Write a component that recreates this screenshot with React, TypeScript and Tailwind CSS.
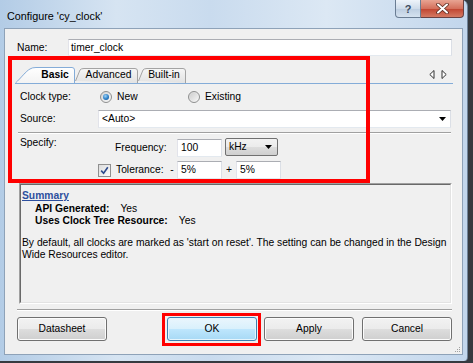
import React from "react";

const tb =
  "bg-white border border-[#dbdfe6] border-t-[#abadb3] border-l-[#e2e3ea] border-b-[#e3e9ef]";
const btn =
  "flex items-center justify-center w-[90px] h-[24px] rounded-[3px] border border-[#707070] bg-[linear-gradient(#f2f2f2_0%,#ebebeb_50%,#dddddd_51%,#cfcfcf_100%)] shadow-[inset_0_0_0_1px_#fcfcfc]";

function Radio({ checked }: { checked?: boolean }) {
  return (
    <div className="w-[12px] h-[12px] rounded-full border border-[#8e8f8f] bg-[linear-gradient(135deg,#d5d5d5,#f9f9f9)] flex items-center justify-center">
      {checked ? (
        <div className="w-[6px] h-[6px] rounded-full bg-[radial-gradient(circle_at_40%_35%,#9fd3f7_0%,#2a7ec6_55%,#1a4f8c_100%)]" />
      ) : (
        <div className="w-[8px] h-[8px] rounded-full bg-[linear-gradient(135deg,#cfcfcf,#f4f4f4)]" />
      )}
    </div>
  );
}

function Tab({
  w,
  label,
  selected,
  first,
}: {
  w: number;
  label: string;
  selected?: boolean;
  first?: boolean;
}) {
  const path = first
    ? `M0.5 16 C6 11 11 4 15 2 Q17 0.5 21 0.5 L${w - 3} 0.5 Q${w - 0.5} 0.5 ${w - 0.5} 3 L${w - 0.5} 16`
    : `M0.5 14 L5 3 Q6 1.5 9 1.5 L${w - 3} 1.5 Q${w - 0.5} 1.5 ${w - 0.5} 4 L${w - 0.5} 16`;
  return (
    <div className="relative h-[16px] flex items-center" style={{ width: w }}>
      <svg className="absolute inset-0" width={w} height={16} viewBox={`0 0 ${w} 16`}>
        <defs>
          <linearGradient id={`g${label}`} x1="0" y1="0" x2="0" y2="1">
            <stop offset="0" stopColor={selected ? "#ffffff" : "#f6f6f6"} />
            <stop offset="1" stopColor={selected ? "#f3f3f3" : "#e2e2e2"} />
          </linearGradient>
        </defs>
        <path d={path} fill={`url(#g${label})`} stroke={selected ? "#84acd8" : "#a3a3a3"} strokeWidth="1" />
      </svg>
      <span
        className={`relative w-full text-center ${selected ? "font-bold pl-[20px]" : "pl-[4px]"}`}
      >
        {label}
      </span>
    </div>
  );
}

export default function App() {
  return (
    <div className="w-[473px] h-[363px] bg-[#363a40] overflow-hidden font-['Liberation_Sans',Arial,sans-serif] text-[10.3px] leading-[12px] text-black">
      <div className="relative w-[468px] h-[361px] rounded-tr-[6px] rounded-br-[4px] bg-[linear-gradient(90deg,#b3cce6_0%,#d6e4f2_25%,#c9dbee_45%,#dce8f4_70%,#c2d6ec_100%)] border-r border-[#6f839a] flex flex-col pl-[4px] pr-[4px] pb-[6px]">
        {/* title bar */}
        <div className="h-[28px] flex items-start">
          <div className="pl-[3px] pt-[10px] text-[10.8px] leading-[13px] text-black">
            Configure 'cy_clock'
          </div>
          <div className="ml-auto flex mr-[-1px]">
            <div className="w-[26px] h-[18px] rounded-bl-[4px] border border-t-0 border-[#6a7d93] bg-[linear-gradient(#eef4fa,#cfdcea_50%,#bccde0_51%,#d5e2ef)] flex items-center justify-center text-[11px] font-bold text-[#3b4b5e]">
              ?
            </div>
            <div className="w-[43px] h-[18px] rounded-br-[4px] border border-t-0 border-l-0 border-[#6a4040] bg-[linear-gradient(#e8a493,#d4705c_50%,#c0432f_51%,#d57a63)] flex items-center justify-center">
              <svg width="13" height="11" viewBox="0 0 13 11">
                <path d="M2 1.5 L11 9.5 M11 1.5 L2 9.5" stroke="#5a2a20" strokeWidth="3.6" strokeLinecap="round" />
                <path d="M2 1.5 L11 9.5 M11 1.5 L2 9.5" stroke="#ffffff" strokeWidth="2" strokeLinecap="round" />
              </svg>
            </div>
          </div>
        </div>

        {/* content panel */}
        <div className="relative flex-1 bg-[#f0f0f0] border border-[#8ea2b8] flex flex-col">
          {/* Name */}
          <div className="mt-[10px] h-[17px] flex items-center">
            <div className="ml-[12px] w-[51px]">Name:</div>
            <div className={`${tb} w-[384px] h-[17px] flex items-center pl-[2px]`}>timer_clock</div>
          </div>

          {/* tabs */}
          <div className="mt-[11px] ml-[10px] w-[438px] flex items-end border-b border-[#84acd8]">
            <Tab w={60} label="Basic" selected first />
            <Tab w={63} label="Advanced" />
            <Tab w={48} label="Built-in" />
            <div className="ml-auto mr-[6px] mb-[4px] flex gap-[6px]">
              <svg width="6" height="9" viewBox="0 0 6 9">
                <path d="M5 0.5 L0.8 4.5 L5 8.5 Z" fill="#fff" stroke="#333" strokeWidth="1" />
              </svg>
              <svg width="6" height="9" viewBox="0 0 6 9">
                <path d="M1 0.5 L5.2 4.5 L1 8.5 Z" fill="#fff" stroke="#333" strokeWidth="1" />
              </svg>
            </div>
          </div>

          {/* page */}
          <div className="ml-[13px] w-[434px] flex flex-col">
            <div className="mt-[3px] h-[20px] flex items-center pl-[2px]">
              <div className="w-[80px]">Clock type:</div>
              <div className="w-[88px] flex items-center">
                <Radio checked />
                <span className="ml-[5px]">New</span>
              </div>
              <div className="flex items-center">
                <Radio />
                <span className="ml-[5px]">Existing</span>
              </div>
            </div>
            <div className="mt-[3px] h-[18px] flex items-center pl-[2px]">
              <div className="w-[78px]">Source:</div>
              <div className={`${tb} w-[353px] h-[18px] flex items-center pl-[3px] pr-[4px]`}>
                <span>&lt;Auto&gt;</span>
                <svg className="ml-auto" width="7" height="4" viewBox="0 0 7 4">
                  <path d="M0 0 L7 0 L3.5 4 Z" fill="#000" />
                </svg>
              </div>
            </div>
            <div className="mt-[4px] w-[433px] h-[2px] border-t border-[#a0a0a0] border-b border-b-white" />
            <div className="mt-[2px] flex items-start pl-[2px]">
              <div className="w-[78px] leading-[14px]">Specify:</div>
              <div className="pt-[3px] flex flex-col">
                <div className="h-[18px] flex items-center">
                  <div className="ml-[17px] w-[62px]">Frequency:</div>
                  <div className={`${tb} w-[45px] h-[18px] flex items-center pl-[3px]`}>100</div>
                  <div className="ml-[3px] -mt-[2px] w-[53px] h-[18px] rounded-[2px] border border-[#707070] bg-[linear-gradient(#f2f2f2_0%,#ebebeb_50%,#dddddd_51%,#cfcfcf_100%)] flex items-center pl-[3px] pr-[5px]">
                    <span>kHz</span>
                    <svg className="ml-auto" width="7" height="4" viewBox="0 0 7 4">
                      <path d="M0 0 L7 0 L3.5 4 Z" fill="#000" />
                    </svg>
                  </div>
                </div>
                <div className="mt-[4px] h-[18px] flex items-center">
                  <div className="w-[13px] h-[13px] border border-[#8f8f8f] bg-[linear-gradient(135deg,#dcdcdc,#fbfbfb)] flex items-center justify-center">
                    <svg width="9" height="9" viewBox="0 0 9 9">
                      <path d="M1.2 4.6 L3.6 7.2 L7.8 1.2" fill="none" stroke="#2c4a8c" strokeWidth="1.6" />
                    </svg>
                  </div>
                  <div className="ml-[5px] w-[51px]">Tolerance:</div>
                  <div className="w-[10px] text-center">-</div>
                  <div className={`${tb} w-[45px] h-[18px] flex items-center pl-[3px]`}>5%</div>
                  <div className="w-[14px] text-center">+</div>
                  <div className={`${tb} w-[45px] h-[18px] flex items-center pl-[3px]`}>5%</div>
                </div>
              </div>
            </div>

            {/* summary */}
            <div className="mt-[4px] ml-[1px] w-[433px] h-[121px] border border-[#a0a0a0] border-r-white border-b-white">
              <div className="h-full border border-[#696969] border-r-[#e3e3e3] border-b-[#e3e3e3] pl-[1px] pt-[5px] leading-[12.5px]">
                <div className="font-bold text-[#2d4f9e] underline">Summary</div>
                <div className="pl-[13px]">
                  <span className="font-bold">API Generated:</span>
                  <span className="ml-[11px]">Yes</span>
                </div>
                <div className="pl-[13px]">
                  <span className="font-bold">Uses Clock Tree Resource:</span>
                  <span className="ml-[11px]">Yes</span>
                </div>
                <div className="mt-[9px] whitespace-nowrap">
                  By default, all clocks are marked as 'start on reset'. The setting can be changed in the Design
                  <br />
                  Wide Resources editor.
                </div>
              </div>
            </div>
          </div>

          {/* bottom separator */}
          <div className="mt-[5px] ml-[12px] w-[435px] h-[2px] border-t border-[#a0a0a0] border-b border-b-white" />

          {/* buttons */}
          <div className="mt-[6px] ml-[12px] flex">
            <div className={btn}>Datasheet</div>
            <div className="ml-[60px] flex items-center justify-center w-[90px] h-[24px] rounded-[3px] border border-[#3c7fb1] bg-[linear-gradient(#eaf6fd_0%,#d9f0fc_50%,#bee6fd_51%,#a7d9f5_100%)] shadow-[inset_0_0_0_1px_#e6f5fd]">
              OK
            </div>
            <div className={`${btn} ml-[7px]`}>Apply</div>
            <div className={`${btn} ml-[8px]`}>Cancel</div>
          </div>

          {/* size grip */}
          <svg className="absolute right-[1px] bottom-[1px]" width="8" height="8" viewBox="0 0 8 8">
            <rect x="6" y="2" width="1" height="1" fill="#a0a0a0" />
            <rect x="4" y="4" width="1" height="1" fill="#a0a0a0" />
            <rect x="6" y="4" width="1" height="1" fill="#a0a0a0" />
            <rect x="2" y="6" width="1" height="1" fill="#a0a0a0" />
            <rect x="4" y="6" width="1" height="1" fill="#a0a0a0" />
            <rect x="6" y="6" width="1" height="1" fill="#a0a0a0" />
          </svg>
        </div>

        {/* annotation overlays */}
        <div className="absolute left-[8px] top-[56px] w-[362px] h-[127px] border-[4px] border-[#ff0000] pointer-events-none" />
        <div className="absolute left-[162px] top-[313px] w-[99px] h-[33px] border-[3px] border-[#ff0000] pointer-events-none" />
      </div>
    </div>
  );
}
